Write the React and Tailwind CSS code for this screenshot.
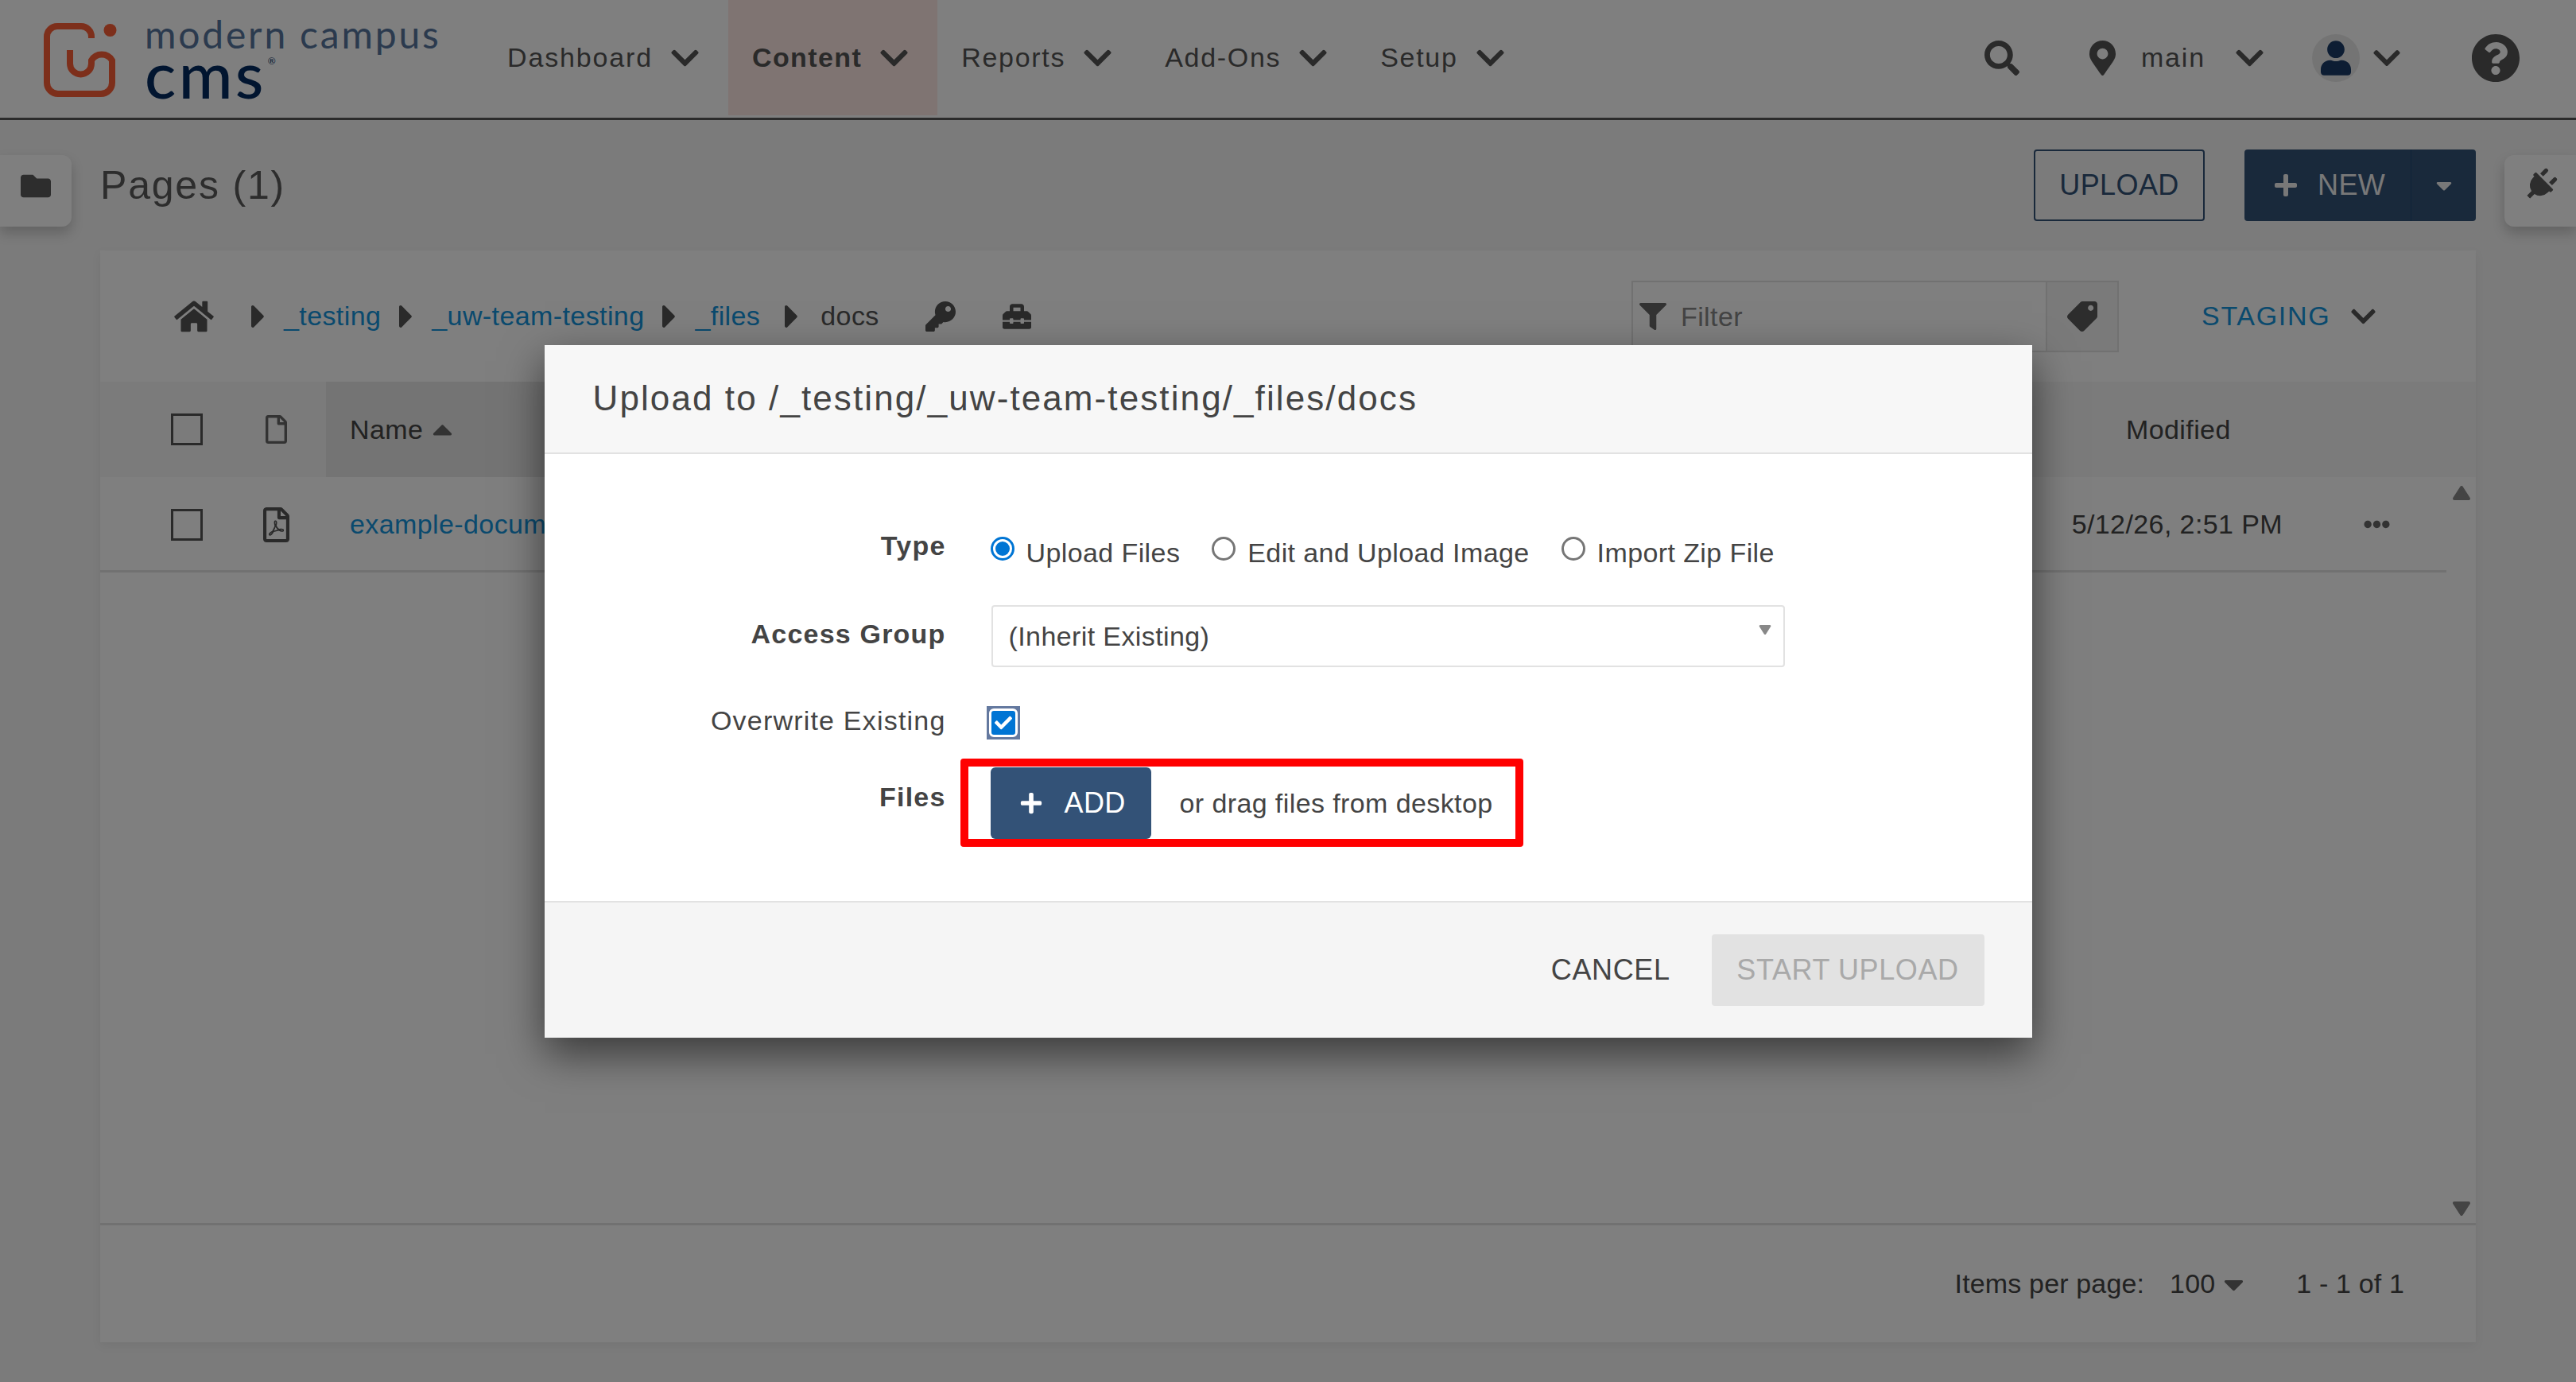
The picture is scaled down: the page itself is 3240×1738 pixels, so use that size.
import {
  FaCaretDown,
  FaCaretRight,
  FaCaretUp,
  FaCheck,
  FaChevronDown,
  FaEllipsisH,
  FaFilter,
  FaFolder,
  FaHome,
  FaKey,
  FaMapMarkerAlt,
  FaPlug,
  FaPlus,
  FaQuestionCircle,
  FaRegFile,
  FaRegFilePdf,
  FaSearch,
  FaTag,
  FaToolbox,
  FaUser,
} from "react-icons/fa";

const navItems = [
  { label: "Dashboard", cls: "tracking-[1.85px]" },
  { label: "Content", cls: "bg-[#ffe9e5] font-bold tracking-[1.4px]" },
  { label: "Reports", cls: "tracking-[1.7px]" },
  { label: "Add-Ons", cls: "tracking-[1.7px]" },
  { label: "Setup", cls: "tracking-[1.7px]" },
];

const crumbs = ["_testing", "_uw-team-testing", "_files"];

const radios = [
  { label: "Upload Files", checked: true },
  { label: "Edit and Upload Image" },
  { label: "Import Zip File" },
];

// small rounded triangle used by the scroll arrows and the native select arrow
function Triangle({ className, down }) {
  return (
    <svg viewBox="0 0 24 20" className={className}>
      <polygon
        points={down ? "3,3 21,3 12,17" : "12,3 21,17 3,17"}
        fill="currentColor"
        stroke="currentColor"
        strokeWidth="4"
        strokeLinejoin="round"
      />
    </svg>
  );
}

function Logo() {
  return (
    <div className="flex items-start">
      <svg viewBox="0 0 100 100" className="h-[100px] w-[100px] shrink-0">
        <path
          d="M65 20V18A13 13 0 0 0 52 5H22A13 13 0 0 0 9 18V76A14 14 0 0 0 23 90H77A14 14 0 0 0 91 76V48A15 15 0 0 0 65 48V52A13.5 13.5 0 0 1 38 52V35"
          fill="none"
          stroke="#fa5f36"
          strokeWidth="8"
        />
        <circle cx="88.5" cy="10" r="8" fill="#fa5f36" />
      </svg>
      <div className="ml-[32px] flex flex-col font-['Lato',sans-serif]">
        <span className="-mt-[11px] h-[52px] text-[48px] leading-[52px] tracking-[2.8px] whitespace-nowrap text-[#56759c]">
          modern campus
        </span>
        <div className="flex items-start">
          <span className="h-[46px] text-[82px] leading-[46px] font-medium tracking-[3.4px] text-[#022a60]">cms</span>
          <span className="mt-[2px] ml-[2px] text-[12px] leading-none text-[#022a60]">®</span>
        </div>
      </div>
    </div>
  );
}

function Header() {
  return (
    <header className="flex h-[151px] items-start border-b-[3px] border-[#565656] bg-white text-[#555]">
      <div className="w-[608px] shrink-0 pt-[28px] pl-[50px]">
        <Logo />
      </div>
      {navItems.map((item) => (
        <div
          key={item.label}
          className={`flex h-[145px] shrink-0 items-center pr-[37px] pl-[30px] text-[34px] whitespace-nowrap ${item.cls}`}
        >
          <span>{item.label}</span>
          <FaChevronDown className="ml-[23px] h-[40px] w-[35px]" />
        </div>
      ))}
      <div className="flex h-[145px] flex-1 items-center justify-end pr-[70px]">
        <FaSearch className="h-[44px] w-[44px]" />
        <FaMapMarkerAlt className="ml-[88px] h-[44px] w-[33px]" />
        <span className="ml-[32px] text-[34px] tracking-[1.85px]">main</span>
        <FaChevronDown className="ml-[38px] h-[40px] w-[35px]" />
        <div className="ml-[61px] flex h-[60px] w-[60px] items-center justify-center rounded-full bg-[#e9e9e9]">
          <FaUser className="h-[44px] w-[38px] text-[#1a3a66]" />
        </div>
        <FaChevronDown className="ml-[17px] h-[40px] w-[34px]" />
        <FaQuestionCircle className="ml-[89px] h-[62px] w-[62px]" />
      </div>
    </header>
  );
}

function Toolbar() {
  return (
    <div className="flex h-[164px] items-start pt-[37px]">
      <div className="mt-[7px] flex h-[90px] w-[90px] items-center justify-center rounded-r-[12px] bg-white shadow-[0_8px_16px_rgba(0,0,0,0.2)]">
        <FaFolder className="-mt-[12px] h-[38px] w-[38px] text-[#5a5a5a]" />
      </div>
      <h1 className="mt-[16px] ml-[36px] text-[50px] leading-[58px] tracking-[1.8px] text-[#5a5a5a]">Pages (1)</h1>
      <div className="flex-1" />
      <button className="h-[90px] w-[215px] rounded-[4px] border-2 border-[#335277] text-[36px] text-[#335277]">
        UPLOAD
      </button>
      <div className="ml-[50px] flex h-[90px] w-[291px] rounded-[4px] bg-[#335277] text-[#f0f0f0]">
        <div className="flex w-[209px] items-center pl-[36px]">
          <FaPlus className="h-[32px] w-[32px]" />
          <span className="ml-[24px] text-[36px]">NEW</span>
        </div>
        <div className="flex flex-1 items-center justify-center border-l-[1px] border-[#1f4770]">
          <FaCaretDown className="h-[32px] w-[22px]" />
        </div>
      </div>
      <div className="mt-[7px] ml-[36px] flex h-[90px] w-[90px] items-center justify-center rounded-l-[12px] bg-white shadow-[0_8px_16px_rgba(0,0,0,0.2)]">
        <FaPlug className="-mt-[14px] h-[42px] w-[42px] rotate-45 text-[#5a5a5a]" />
      </div>
    </div>
  );
}

function Breadcrumbs() {
  return (
    <div className="flex h-[165px] items-start">
      <div className="flex h-[165px] flex-1 items-center pl-[93px] text-[34px] text-[#555]">
        <FaHome className="mr-[24px] h-[44px] w-[50px]" />
        {crumbs.map((label) => (
          <div key={label} className="flex items-center">
            <FaCaretRight className="mx-[23px] h-[48px] w-[18px]" />
            <span className="text-[#1494dc]">{label}</span>
          </div>
        ))}
        <FaCaretRight className="mr-[27px] ml-[31px] h-[48px] w-[18px]" />
        <span>docs</span>
        <FaKey className="ml-[58px] h-[38px] w-[38px]" />
        <FaToolbox className="ml-[57px] h-[36px] w-[40px]" />
      </div>
      <div className="mt-[38px] flex h-[90px] w-[613px] border-[2px] border-[#e2e2e2]">
        <div className="flex flex-1 items-center pl-[8px] text-[34px] text-[#888]">
          <FaFilter className="h-[34px] w-[34px] text-[#666]" />
          <span className="ml-[18px]">Filter</span>
        </div>
        <div className="flex w-[90px] items-center justify-center border-l-[2px] border-[#e2e2e2] bg-[#f4f4f4]">
          <FaTag className="h-[38px] w-[38px] rotate-90 text-[#5a5a5a]" />
        </div>
      </div>
      <div className="flex h-[165px] w-[449px] items-center pl-[104px] text-[34px] tracking-[1.7px] text-[#1494dc]">
        STAGING
        <FaChevronDown className="ml-[26px] h-[36px] w-[31px] text-[#555]" />
      </div>
    </div>
  );
}

function FileTable() {
  return (
    <div className="flex flex-1 flex-col text-[34px] text-[#444]">
      <div className="flex h-[120px] items-center bg-[#f6f6f6]">
        <span className="ml-[89px] h-[40px] w-[40px] border-[3px] border-[#555]" />
        <FaRegFile className="ml-[78px] h-[36px] w-[29px] text-[#666]" />
        <div className="ml-[48px] flex h-full w-[500px] items-center bg-[#e8e8e8] pl-[30px]">
          Name
          <FaCaretUp className="ml-[12px] h-[40px] w-[25px] text-[#666]" />
        </div>
        <span className="ml-auto w-[440px]">Modified</span>
      </div>
      <div className="flex flex-1">
        <div className="flex-1">
          <div className="flex h-[120px] items-center border-b-[3px] border-[#e2e2e2] pt-[2px]">
            <span className="ml-[89px] h-[40px] w-[40px] border-[3px] border-[#555]" />
            <FaRegFilePdf className="ml-[75px] h-[44px] w-[35px] text-[#555]" />
            <span className="ml-[75px] whitespace-nowrap text-[#1494dc]">example-document.pdf</span>
            <span className="ml-auto">5/12/26, 2:51 PM</span>
            <FaEllipsisH className="mr-[71px] ml-[102px] h-[33px] w-[33px] text-[#666]" />
          </div>
        </div>
        <div className="flex w-[37px] flex-col items-center justify-between pt-[10px] pb-[8px] text-[#888]">
          <Triangle className="h-[20px] w-[24px]" />
          <Triangle down className="h-[20px] w-[24px]" />
        </div>
      </div>
      <div className="flex h-[150px] items-center justify-end border-t-[3px] border-[#e2e2e2] pr-[90px] tracking-[0.15px]">
        <span>Items per page:</span>
        <span className="ml-[32px]">100</span>
        <FaCaretDown className="ml-[11px] h-[40px] w-[25px] text-[#666]" />
        <span className="ml-[66px]">1 - 1 of 1</span>
      </div>
    </div>
  );
}

function FieldLabel({ children, bold, className = "" }) {
  return (
    <div className={`w-[505px] shrink-0 text-right tracking-[1.2px] ${bold ? "font-bold" : ""} ${className}`}>
      {children}
    </div>
  );
}

function UploadDialog() {
  return (
    <div className="flex h-[871px] w-[1871px] flex-col bg-white text-[34px] text-[#444] shadow-[0_20px_50px_rgba(0,0,0,0.55)]">
      <div className="flex h-[137px] items-center border-b-[2px] border-[#e2e2e2] bg-[#f7f7f7] pl-[61px] text-[44px] tracking-[2.1px]">
        Upload to /_testing/_uw-team-testing/_files/docs
      </div>
      <div className="flex flex-1 flex-col pt-[96px]">
        <div className="flex h-[50px] items-start">
          <FieldLabel bold className="-mt-[6px]">Type</FieldLabel>
          <div className="ml-[56px] flex">
            {radios.map((r) => (
              <label key={r.label} className="mr-[40px] flex items-start">
                {r.checked ? (
                  <span className="mt-[8px] flex h-[30px] w-[30px] items-center justify-center rounded-full border-[3px] border-[#0075d4]">
                    <span className="h-[18px] w-[18px] rounded-full bg-[#0075d4]" />
                  </span>
                ) : (
                  <span className="mt-[8px] h-[30px] w-[30px] rounded-full border-[3px] border-[#767676]" />
                )}
                <span className="mt-[3px] ml-[15px] whitespace-nowrap">{r.label}</span>
              </label>
            ))}
          </div>
        </div>
        <div className="mt-[44px] flex h-[78px] items-center">
          <FieldLabel bold className="-mt-[4px]">Access Group</FieldLabel>
          <div className="relative ml-[57px] flex h-full w-[998px] items-center rounded-[4px] border-[2px] border-[#e2e2e2] pt-[2px] pl-[20px]">
            (Inherit Existing)
            <Triangle down className="absolute top-[22px] right-[15px] h-[14px] w-[16px] text-[#888]" />
          </div>
        </div>
        <div className="mt-[49px] flex h-[42px] items-center">
          <FieldLabel className="-mt-[4px]">Overwrite Existing</FieldLabel>
          <span className="ml-[51px] flex h-[42px] w-[42px] items-center justify-center bg-[#64799f]">
            <span className="flex h-[36px] w-[36px] items-center justify-center rounded-[6px] border-[3px] border-white bg-[#0075d4]">
              <FaCheck className="h-[22px] w-[22px] text-white" />
            </span>
          </span>
        </div>
        <div className="mt-[24px] flex items-start">
          <FieldLabel bold className="mt-[23px]">Files</FieldLabel>
          <div className="ml-[18px] flex h-[111px] w-[708px] items-center rounded-[4px] border-[10px] border-[#ff0000] pt-[2px] pl-[28px]">
            <div className="flex h-[90px] w-[202px] items-center rounded-[6px] bg-[#335277] pl-[36px] text-white">
              <FaPlus className="h-[30px] w-[30px]" />
              <span className="ml-[27px] text-[36px]">ADD</span>
            </div>
            <span className="ml-[36px] whitespace-nowrap">or drag files from desktop</span>
          </div>
        </div>
      </div>
      <div className="flex h-[172px] items-center justify-end border-t-[2px] border-[#e2e2e2] bg-[#f5f5f5] pr-[60px] text-[36px] tracking-[0.6px]">
        <span>CANCEL</span>
        <span className="ml-[52px] flex h-[90px] w-[343px] items-center justify-center rounded-[4px] bg-[#e2e2e2] text-[#a9a9a9]">
          START UPLOAD
        </span>
      </div>
    </div>
  );
}

export default function App() {
  return (
    <div className="relative flex h-[1738px] w-[3240px] flex-col overflow-hidden bg-[#f6f6f6] font-['Liberation_Sans',Arial,sans-serif] tracking-[0.4px]">
      <Header />
      <Toolbar />
      <main className="mr-[126px] ml-[126px] flex h-[1373px] flex-col bg-[#fefefe] shadow-[0_4px_12px_rgba(0,0,0,0.06)]">
        <Breadcrumbs />
        <FileTable />
      </main>
      {/* modal backdrop and dialog */}
      <div className="absolute inset-0 flex items-center justify-center bg-black/50">
        <UploadDialog />
      </div>
    </div>
  );
}
